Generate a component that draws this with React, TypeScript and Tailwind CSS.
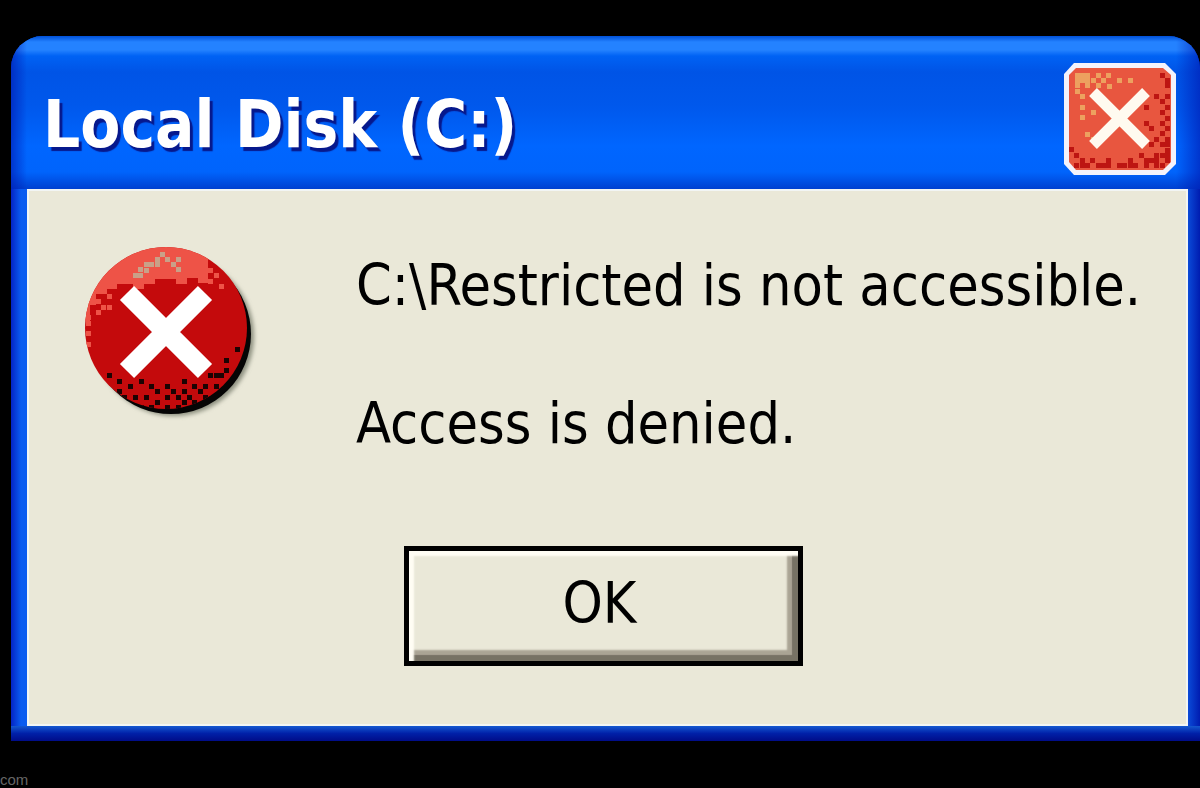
import React from 'react';

type Dot = [number, number];

interface DotsProps {
  points: Dot[];
  fill: string;
  size?: number;
}

const CLOSE_LIGHT: Dot[] = [
  [11, 10], [16, 10], [21, 10], [32, 10], [42, 10], [11, 15], [16, 15], [21, 15], [27, 15], [37, 15],
  [53, 15], [64, 15], [11, 20], [21, 20], [32, 20], [11, 26], [16, 31], [43, 21], [16, 42], [27, 47],
  [16, 52], [21, 69], [27, 74],
];

const CLOSE_DARK: Dot[] = [
  [96, 10], [101, 15], [101, 20], [90, 31], [101, 31], [96, 36], [101, 42], [80, 42], [96, 47], [101, 53],
  [80, 58], [96, 58], [85, 63], [101, 63], [96, 68], [90, 74], [101, 74], [85, 79], [96, 79], [101, 79],
  [101, 85], [5, 84], [10, 90], [75, 90], [90, 90], [96, 90], [101, 90], [16, 95], [26, 95], [42, 95],
  [64, 95], [80, 95], [85, 95], [90, 95], [101, 95], [10, 100], [16, 100], [21, 100], [32, 100],
  [37, 100], [42, 100], [53, 100], [58, 100], [64, 100], [69, 100], [80, 100], [90, 100], [96, 100],
];

const ERROR_LIGHT: Dot[] = [
  [21, 48], [27, 53], [16, 58], [21, 64], [27, 64], [16, 69], [6, 74], [6, 58], [6, 90], [6, 101],
  [32, 43], [16, 48], [134, 32], [139, 43], [128, 38], [128, 27], [6, 80],
];

const ERROR_DARK: Dot[] = [
  [27, 132], [37, 138], [48, 143], [59, 138], [69, 143], [75, 148], [85, 143], [102, 138], [112, 143],
  [118, 148], [128, 132], [139, 132], [144, 127], [144, 117], [155, 106], [123, 143], [102, 148],
  [53, 154], [64, 154], [75, 159], [85, 154], [96, 154], [107, 154], [112, 159], [123, 154], [134, 143],
  [91, 148], [42, 154], [59, 164], [69, 164], [85, 164], [96, 164], [102, 159], [37, 148], [134, 132],
];

const ERROR_GLARE: Dot[] = [
  [53, 32], [58, 26], [64, 21], [69, 21], [75, 16], [80, 11], [85, 16], [91, 21], [75, 21],
  [96, 16], [96, 26], [64, 27], [58, 32],
];

const Dots: React.FC<DotsProps> = ({ points, fill, size = 5 }) => (
  <g fill={fill}>
    {points.map(([x, y]) => (
      <rect key={`${x}-${y}`} x={x} y={y} width={size} height={size} />
    ))}
  </g>
);

const CloseIcon = () => (
  <svg viewBox="0 0 112 112" className="w-28 h-28" aria-hidden="true">
    <path d="M10 0H101L112 11V101L101 112H10L0 101V11Z" fill="#f4f3fb" />
    <path d="M12 5H99L107 12V99L99 107H12L5 99V12Z" fill="#e8563f" />
    <Dots points={CLOSE_LIGHT} fill="#eda15f" />
    <Dots points={CLOSE_DARK} fill="#bd1512" />
    <path d="M29 29L82 82M82 29L29 82" stroke="#fffaf0" strokeWidth="11" />
  </svg>
);

const ErrorIcon = () => (
  <svg viewBox="0 0 180 180" className="w-45 h-45 shrink-0" aria-hidden="true">
    <defs>
      <clipPath id="disc">
        <circle cx="86" cy="87" r="81" />
      </clipPath>
      <filter id="soft">
        <feGaussianBlur stdDeviation="2" />
      </filter>
    </defs>
    <circle cx="94" cy="95" r="80" fill="#8d9080" filter="url(#soft)" />
    <circle cx="91" cy="93" r="80" fill="#050505" />
    <circle cx="86" cy="87" r="81" fill="#c40a0c" />
    <g clipPath="url(#disc)">
      <path
        d="M0 0H128V42H118V37H107V43H96V38H75V43H64V48H53V43H37V48H27V53H16V64H10V80H0Z"
        fill="#ee5347"
      />
      <Dots points={ERROR_LIGHT} fill="#ee5347" />
      <Dots points={ERROR_GLARE} fill="#c9a088" />
      <Dots points={ERROR_DARK} fill="#1c0303" />
    </g>
    <path d="M47 52L125 130M125 52L47 130" stroke="#ffffff" strokeWidth="20" />
  </svg>
);

const TitleBar: React.FC<{ title: string }> = ({ title }) => (
  <header className="flex h-[153px] items-center justify-between rounded-t-[32px] bg-[linear-gradient(to_right,#0018b0a0_0px,#0018b000_16px,#0018b000_calc(100%-24px),#0018b0a0_100%),linear-gradient(to_bottom,#0050d8_0px,#2482ff_6px,#2482ff_14px,#0062f4_20px,#0054e6_36px,#0058ec_70px,#0066ff_110px,#0064fc_136px,#0040d0_153px)] pl-8 pr-6 pt-3">
    <h1 className="pt-3 text-[65px] leading-20 font-bold text-white [text-shadow:3px_4px_1px_#06188c]">
      {title}
    </h1>
    <button type="button" aria-label="Close">
      <CloseIcon />
    </button>
  </header>
);

export default function App() {
  return (
    <main className="flex min-h-screen flex-col overflow-hidden bg-black pt-9">
      <section
        role="dialog"
        aria-label="Local Disk (C:)"
        className="ml-[11px] rounded-t-[32px] bg-[linear-gradient(to_right,#0424c4_0px,#0a5cf0_10px,#0a5cf0_16px,#0a4ad8_calc(100%-12px),#001cb0_100%)] font-['DejaVu_Sans_Condensed','DejaVu_Sans',sans-serif] text-[57px] text-black"
      >
        <TitleBar title="Local Disk (C:)" />
        <div className="mr-3 ml-4 border-2 border-[#f2f5f4] bg-[#eae8d8] pt-[50px] pb-[58px]">
          <div className="flex items-start pl-[51px]">
            <ErrorIcon />
            <div className="ml-24 flex flex-col gap-[69px] pt-[10px] leading-[69px]">
              <p className="whitespace-nowrap">C:\Restricted is not accessible.</p>
              <p>Access is denied.</p>
            </div>
          </div>
          <div className="mt-22 flex justify-center pr-2">
            <button
              type="button"
              className="h-30 w-[399px] border-[5px] border-black bg-[#eae8d8] pr-2 pb-1 shadow-[inset_5px_5px_2px_#fffdf4,inset_-6px_-6px_1px_#777264,inset_-11px_-11px_2px_#aaa494]"
            >
              OK
            </button>
          </div>
        </div>
        <div className="h-[15px] bg-[linear-gradient(to_bottom,#1458d0,#0020a8_50%,#000c88)]" />
      </section>
      <footer className="flex flex-1 items-end">
        <span className="font-['Liberation_Sans',sans-serif] text-[15px] leading-4 text-[#666666]">com</span>
      </footer>
    </main>
  );
}
